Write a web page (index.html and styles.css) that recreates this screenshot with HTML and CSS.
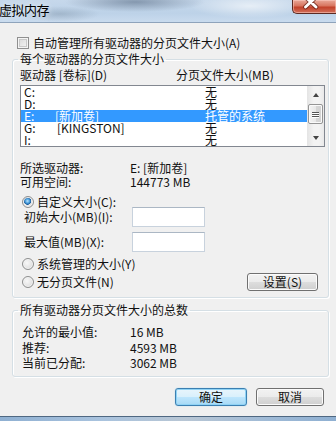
FILE: index.html
```html
<!DOCTYPE html>
<html lang="zh-CN">
<head>
<meta charset="utf-8">
<title>虚拟内存</title>
<link rel="stylesheet" href="styles.css">
</head>
<body>
<div class="window">
  <div class="titlebar">
    <span class="title">虚拟内存</span>
    <div class="close">
      <svg width="44" height="14" viewBox="0 0 44 14">
        <path d="M12.5 -3 L23 7 M23 -3 L12.5 7" stroke="#5a1a10" stroke-width="4.6" stroke-linecap="round" fill="none" opacity="0.7"/>
        <path d="M12.5 -3 L23 7 M23 -3 L12.5 7" stroke="#ffffff" stroke-width="2.8" stroke-linecap="round" fill="none"/>
      </svg>
    </div>
  </div>
  <div class="content">
    <label class="check-row"><span class="checkbox"></span><span>自动管理所有驱动器的分页文件大小(A)</span></label>

    <fieldset class="group g1">
      <legend>每个驱动器的分页文件大小</legend>
      <div class="list-head"><span>驱动器 [卷标](D)</span><span>分页文件大小(MB)</span></div>
      <div class="listbox">
        <div class="rows">
          <div class="row"><span>C:</span><span></span><span>无</span></div>
          <div class="row"><span>D:</span><span></span><span>无</span></div>
          <div class="row selected"><span>E:</span><span>[新加卷]</span><span>托管的系统</span></div>
          <div class="row"><span>G:</span><span class="kl">[KINGSTON]</span><span>无</span></div>
          <div class="row"><span>I:</span><span></span><span>无</span></div>
        </div>
        <div class="scrollbar">
          <div class="sb-btn"><span class="arrow up"></span></div>
          <div class="sb-track"><div class="thumb"><span></span><span></span><span></span></div></div>
          <div class="sb-btn"><span class="arrow down"></span></div>
        </div>
      </div>

      <div class="info">
        <span>所选驱动器:</span><span>E: [新加卷]</span>
        <span>可用空间:</span><span>144773 MB</span>
      </div>

      <label class="radio-row custom"><span class="radio checked"></span><span>自定义大小(C):</span></label>
      <div class="input-row first"><span class="lbl">初始大小(MB)(I):</span><span class="input"></span></div>
      <div class="input-row second"><span class="lbl">最大值(MB)(X):</span><span class="input"></span></div>
      <label class="radio-row sys"><span class="radio"></span><span>系统管理的大小(Y)</span></label>
      <div class="last-row">
        <label class="radio-row"><span class="radio"></span><span>无分页文件(N)</span></label>
        <button class="btn set">设置(S)</button>
      </div>
    </fieldset>

    <fieldset class="group g2">
      <legend>所有驱动器分页文件大小的总数</legend>
      <div class="totals">
        <span>允许的最小值:</span><span>16 MB</span>
        <span>推荐:</span><span>4593 MB</span>
        <span>当前已分配:</span><span>3062 MB</span>
      </div>
    </fieldset>

    <div class="actions">
      <button class="btn default ok">确定</button>
      <button class="btn cancel">取消</button>
    </div>
  </div>
  <div class="footer"></div>
</div>
</body>
</html>
```

FILE: styles.css
```css
* { box-sizing: border-box; }
html, body { margin: 0; padding: 0; }
body {
  width: 336px;
  height: 421px;
  overflow: hidden;
  background: #f0f0f0;
  font-family: "Noto Sans CJK SC", "Microsoft YaHei", sans-serif;
  font-size: 12px;
  color: #111;
}
.window {
  width: 336px;
  height: 421px;
  display: flex;
  flex-direction: column;
  background: #f0f0f0;
}

/* title bar */
.titlebar {
  height: 23px;
  flex: none;
  display: flex;
  align-items: flex-start;
  justify-content: space-between;
  border-bottom: 1px solid #8ea3bb;
  background:
    radial-gradient(ellipse 70px 10px at 135px 2px, rgba(80,100,125,0.55), rgba(80,100,125,0) 100%),
    radial-gradient(ellipse 40px 8px at 60px 14px, rgba(110,130,150,0.35), rgba(110,130,150,0) 100%),
    radial-gradient(ellipse 60px 12px at 250px 6px, rgba(255,255,255,0.6), rgba(255,255,255,0) 100%),
    linear-gradient(#c6d8eb, #bdd2e8 60%, #c9dbee);
}
.title {
  font-size: 13px;
  line-height: 20px;
  margin-left: -1px;
  letter-spacing: -0.5px;
  color: #000;
  text-shadow: 0 0 6px rgba(255,255,255,0.9);
}
.close {
  width: 44px;
  height: 14px;
  border: 1px solid #5c2a22;
  border-top: none;
  border-right: none;
  border-radius: 0 0 0 5px;
  background: linear-gradient(#e9a899 0%, #d8755f 45%, #c2412a 55%, #d2705a 100%);
  box-shadow: inset 0 0 0 1px rgba(255,210,200,0.5);
  overflow: hidden;
}
.close svg { display: block; }

/* content */
.content {
  padding-left: 12px;
}
.check-row {
  display: flex;
  align-items: center;
  height: 14px;
  margin-top: 13px;
  padding-left: 5px;
  gap: 4px;
  line-height: 14px;
}
.checkbox {
  width: 12px;
  height: 12px;
  border: 1px solid #8f8f8f;
  background: linear-gradient(135deg, #d6d6d6, #f7f7f7);
  box-shadow: inset 0 0 0 1px #f4f4f4, inset 0 0 0 2px #c9c9c9;
}

.group {
  width: 317px;
  min-width: 0;
  margin: 0;
  border: 1px solid #d5dfe5;
  border-radius: 3px;
  box-shadow: inset 1px 1px 0 #fff, 1px 1px 0 #fff;
  padding: 0 3px 6px 7px;
}
.group legend {
  padding: 0 2px;
  margin-left: -2px;
  line-height: 12px;
  height: 12px;
  color: #111;
}
.g1 { margin-top: 3px; }
.g2 { margin-top: 6px; padding-bottom: 5px; }

.list-head {
  display: grid;
  grid-template-columns: 156px 1fr;
  margin-top: 4px;
  line-height: 12px;
  height: 12px;
}

.listbox {
  margin-top: 4px;
  width: 305px;
  height: 62px;
  border: 1px solid #828790;
  background: #fff;
  display: flex;
}
.rows { flex: 1; }
.row {
  display: grid;
  grid-template-columns: 31px 150px 1fr;
  height: 12px;
  line-height: 12px;
  padding-left: 3px;
  white-space: nowrap;
}
.row .kl { padding-left: 2px; }
.row.selected {
  background: #3399ff;
  color: #fff;
}
.scrollbar {
  width: 17px;
  display: flex;
  flex-direction: column;
  background: linear-gradient(90deg, #e4e4e4, #f3f3f3 40%, #f3f3f3 70%, #e9e9e9);
}
.sb-btn {
  height: 17px;
  flex: none;
  display: flex;
  align-items: center;
  justify-content: center;
}
.arrow {
  width: 0;
  height: 0;
  border-left: 3.5px solid transparent;
  border-right: 3.5px solid transparent;
}
.arrow.up { border-bottom: 4px solid #444; }
.arrow.down { border-top: 4px solid #444; }
.sb-track { flex: 1; padding-top: 1px; }
.thumb {
  height: 20px;
  margin: 0 1px;
  border: 1px solid #959595;
  border-radius: 2px;
  background: linear-gradient(90deg, #f3f3f3, #e8e8e8 50%, #d6d6d6 51%, #d2d2d2);
  box-shadow: inset 0 0 0 1px #fafafa;
  display: flex;
  flex-direction: column;
  align-items: center;
  justify-content: center;
  gap: 1px;
}
.thumb span {
  display: block;
  width: 7px;
  height: 1px;
  background: #555;
  box-shadow: 0 1px 0 #fff;
}

.info, .totals {
  display: grid;
  grid-template-columns: 110px 1fr;
  line-height: 14px;
}
.info { margin-top: 14px; }
.totals {
  margin-top: 8px;
  padding-left: 2px;
  grid-template-columns: 108px 1fr;
  line-height: 15.5px;
}

.radio-row {
  display: flex;
  align-items: center;
  gap: 3px;
  padding-left: 2px;
  line-height: 12px;
}
.radio-row.custom { margin-top: 7px; height: 11px; }
.radio-row.sys { margin-top: 6px; height: 12px; }
.radio {
  width: 12px;
  height: 12px;
  border-radius: 50%;
  border: 1px solid #8e8f8f;
  background: radial-gradient(circle at 40% 40%, #f8f8f8, #d4d4d4);
  box-shadow: inset 0 0 0 1px #f4f4f4;
  flex: none;
}
.radio.checked {
  background:
    radial-gradient(circle at 45% 40%, #bfe4fb 0, #4fa3e0 2px, #1b5e9e 3.5px, rgba(27,94,158,0) 4px),
    radial-gradient(circle at 40% 40%, #f8f8f8, #d4d4d4);
}

.input-row {
  display: flex;
  align-items: center;
  height: 20px;
  padding-left: 4px;
}
.input-row.second { margin-top: 5px; }
.lbl { width: 108px; line-height: 12px; }
.input {
  width: 73px;
  height: 20px;
  background: #fff;
  border: 1px solid #c8d2dd;
  border-top-color: #abb7c4;
}

.last-row {
  display: flex;
  align-items: center;
  height: 18px;
  margin-top: 3px;
}
.last-row .radio-row { height: 12px; }

.btn {
  height: 18px;
  padding: 0;
  font: inherit;
  font-size: 12px;
  line-height: 16px;
  color: #111;
  border: 1px solid #707070;
  border-radius: 3px;
  background: linear-gradient(#f2f2f2 0%, #ebebeb 50%, #dddddd 51%, #cfcfcf 100%);
  box-shadow: inset 0 0 0 1px #fbfbfb;
}
.btn.set { width: 71px; margin-left: auto; margin-right: 7px; }

.actions {
  display: flex;
  margin-top: 11px;
  padding-left: 163px;
  gap: 9px;
}
.btn.ok {
  width: 72px;
  border-color: #3c7fb1;
  background: linear-gradient(#e8f5fc 0%, #d9f0fc 50%, #bee6fd 51%, #a7d9f5 100%);
  box-shadow: inset 0 0 0 1px #8fd3f5, 0 0 1px #6cc7f2;
}
.btn.cancel { width: 68px; }

.footer {
  margin-top: auto;
  height: 5px;
  flex: none;
  border-top: 1px solid #4f6882;
  background: linear-gradient(90deg, #8fb0d2, #a9c3de 30%, #b8c6d4 55%, #9fbad6 80%, #8fb0d2);
}
```
